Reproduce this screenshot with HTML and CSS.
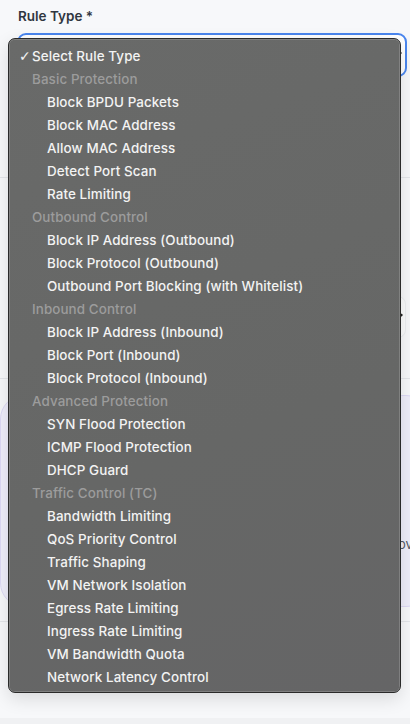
FILE: index.html
```html
<!DOCTYPE html>
<html>
<head>
<meta charset="utf-8">
<link rel="stylesheet" href="styles.css">
</head>
<body>
<div class="page">
  <div class="field">
    <div class="label">Rule Type *</div>
    <div class="select focus"><span class="chev"></span></div>
  </div>
  <div class="rule r1"></div>
  <div class="field2">
    <div class="select plain"><span class="chev"></span></div>
  </div>
  <div class="rule r2"></div>
  <div class="panel"><span class="peek">ov</span></div>
  <div class="rule r3"></div>
  <div class="footer"></div>
</div>

<div class="menu">
  <div class="opt sel"><span class="check">✓</span>Select Rule Type</div>
  <div class="grp">Basic Protection</div>
  <div class="opt">Block BPDU Packets</div>
  <div class="opt">Block MAC Address</div>
  <div class="opt">Allow MAC Address</div>
  <div class="opt">Detect Port Scan</div>
  <div class="opt">Rate Limiting</div>
  <div class="grp">Outbound Control</div>
  <div class="opt">Block IP Address (Outbound)</div>
  <div class="opt">Block Protocol (Outbound)</div>
  <div class="opt">Outbound Port Blocking (with Whitelist)</div>
  <div class="grp">Inbound Control</div>
  <div class="opt">Block IP Address (Inbound)</div>
  <div class="opt">Block Port (Inbound)</div>
  <div class="opt">Block Protocol (Inbound)</div>
  <div class="grp">Advanced Protection</div>
  <div class="opt">SYN Flood Protection</div>
  <div class="opt">ICMP Flood Protection</div>
  <div class="opt">DHCP Guard</div>
  <div class="grp">Traffic Control (TC)</div>
  <div class="opt">Bandwidth Limiting</div>
  <div class="opt">QoS Priority Control</div>
  <div class="opt">Traffic Shaping</div>
  <div class="opt">VM Network Isolation</div>
  <div class="opt">Egress Rate Limiting</div>
  <div class="opt">Ingress Rate Limiting</div>
  <div class="opt">VM Bandwidth Quota</div>
  <div class="opt">Network Latency Control</div>
</div>
</body>
</html>
```

FILE: styles.css
```css
html, body {
  margin: 0;
  padding: 0;
}
body {
  width: 410px;
  height: 724px;
  overflow: hidden;
  background: #f7f8fa;
  font-family: Inter, "Liberation Sans", sans-serif;
  position: relative;
}
.page {
  display: flex;
  flex-direction: column;
}
.field {
  padding: 7px 3px 0 17px;
}
.label {
  font-size: 13.5px;
  font-weight: 600;
  color: #2f3640;
  height: 18px;
  line-height: 18px;
  padding-left: 1px;
  margin-bottom: 8px;
}
.select {
  height: 40px;
  border-radius: 9px;
  background: #ffffff;
  position: relative;
}
.select.focus {
  border: 2px solid #4a86ee;
}
.chev {
  position: absolute;
  width: 5px;
  height: 2px;
  background: #222;
  transform: rotate(-45deg);
}
.focus .chev {
  right: 3px;
  top: 18px;
}
.rule {
  height: 1px;
  background: #e4e6ea;
}
.r1 {
  margin-top: 100px;
}
.field2 {
  padding: 118px 4px 0 300px;
}
.select.plain {
  height: 40px;
  border: 1px solid #eceef1;
  border-radius: 8px;
  background: #fafbfc;
}
.plain .chev {
  right: 2px;
  top: 18px;
}
.r2 {
  margin-top: 40px;
}
.panel {
  margin-top: 16px;
  height: 210px;
  margin-right: -20px;
  background: #efeefa;
  border: 1px solid #ddd9f4;
  border-radius: 24px;
  position: relative;
}
.peek {
  position: absolute;
  left: 397px;
  top: 140px;
  font-size: 13px;
  color: #555a66;
}
.r3 {
  margin-top: 14px;
}
.footer {
  margin-top: 96px;
  height: 8px;
  background: #f0f1f3;
}

/* native select popup */
.menu {
  position: absolute;
  left: 8px;
  top: 38px;
  width: 393px;
  height: 655px;
  box-sizing: border-box;
  padding-top: 6px;
  background: linear-gradient(160deg, #696a69 0%, #666766 60%, #656566 100%);
  border: 1px solid #2a2a2a;
  border-radius: 7px;
  box-shadow: 0 0 0 0.5px rgba(255,255,255,0.35) inset, 0 6px 18px rgba(0,0,0,0.12);
  font-family: Inter, "Liberation Sans", sans-serif;
  font-size: 13.4px;
  font-weight: 500;
  letter-spacing: 0.1px;
}
.opt, .grp {
  height: 23px;
  line-height: 23px;
  white-space: nowrap;
}
.opt {
  color: #f3f3f3;
  padding-left: 38px;
}
.opt.sel {
  padding-left: 23px;
}
.check {
  display: inline-block;
  width: 13px;
  margin-left: -13px;
  font-size: 14px;
  font-weight: 400;
  font-family: "DejaVu Sans", sans-serif;
}
.grp {
  color: #9c9c9c;
  padding-left: 23px;
}
```
